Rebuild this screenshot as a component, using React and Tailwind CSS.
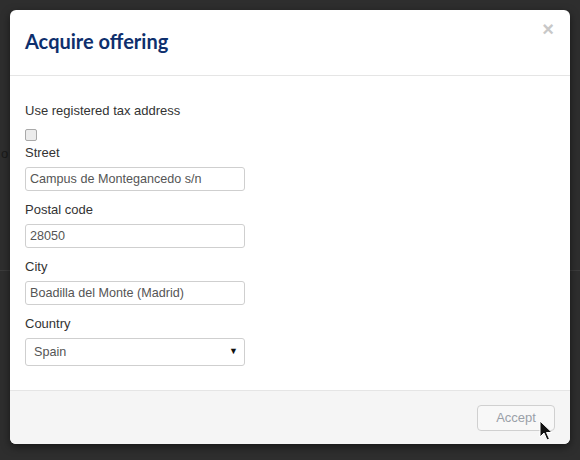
import React from 'react';

const FIELDS = [
  { label: 'Street', value: 'Campus de Montegancedo s/n' },
  { label: 'Postal code', value: '28050' },
  { label: 'City', value: 'Boadilla del Monte (Madrid)' },
];

function Cursor() {
  return (
    <svg className="absolute left-[539px] top-[420px]" width="14" height="22" viewBox="0 0 14 22">
      <path d="M1 1 L1 17 L5 13 L8 20 L10.5 19 L7.5 12.5 L13 12.5 Z" fill="#111" stroke="#fff" strokeWidth="1" />
    </svg>
  );
}

export default function App() {
  return (
    <div className="relative w-[580px] h-[460px] bg-[#2e2e2e] overflow-hidden font-['Liberation_Sans',Arial,sans-serif]">
      {/* page behind the backdrop */}
      <div className="pt-[145px] pl-[1px] text-[13px] leading-[18px] text-[#1a1a1a]">o</div>
      <div className="mt-[107px] h-px bg-[#3c3c3c]" />

      {/* modal */}
      <div className="absolute left-[10px] top-[10px] w-[560px] h-[434px] bg-white rounded-[6px] flex flex-col shadow-[0_3px_9px_rgba(0,0,0,0.5)]">
        <div className="h-[66px] border-b border-[#e5e5e5] flex items-center justify-between pl-[15px] pr-[15px]">
          <h1 className="font-['Lato',sans-serif] font-bold text-[20px] leading-none text-[#0e2f6d] mt-[-3px]">
            Acquire offering
          </h1>
          <span className="text-[#c8c8c8] font-bold text-[20px] leading-none mt-[-27px] mr-[1px]">×</span>
        </div>

        <div className="flex-1 px-[15px] pt-[26px] text-[13px] text-[#333]">
          <div className="leading-[18px]">Use registered tax address</div>
          <div className="mt-[9px] w-[12px] h-[12px] rounded-[2px] border border-[#a9a9a9] bg-[#ececec]" />
          {FIELDS.map((f, i) => (
            <div key={f.label} className={i === 0 ? 'mt-[3px]' : 'mt-[10px]'}>
              <div className="leading-[18px]">{f.label}</div>
              <div className="mt-[5px] w-[220px] h-[24px] border border-[#cfcfcf] rounded-[3px] flex items-center px-[4px] text-[12.6px] text-[#555]">
                {f.value}
              </div>
            </div>
          ))}
          <div className="mt-[10px]">
            <div className="leading-[18px]">Country</div>
            <div className="mt-[5px] w-[220px] h-[28px] border border-[#cfcfcf] rounded-[3px] flex items-center justify-between pl-[8px] pr-[6px] text-[12.6px] text-[#555]">
              <span>Spain</span>
              <span className="text-[#111] text-[9px]">▼</span>
            </div>
          </div>
        </div>

        <div className="h-[54px] border-t border-[#e5e5e5] bg-[#f5f5f5] rounded-b-[6px] flex items-center justify-end pr-[15px]">
          <div className="w-[78px] h-[26px] border border-[#d0d0d0] rounded-[4px] bg-[#f8f8f8] flex items-center justify-center text-[13px] text-[#9aa0a8]">
            Accept
          </div>
        </div>
      </div>
      <Cursor />
    </div>
  );
}
